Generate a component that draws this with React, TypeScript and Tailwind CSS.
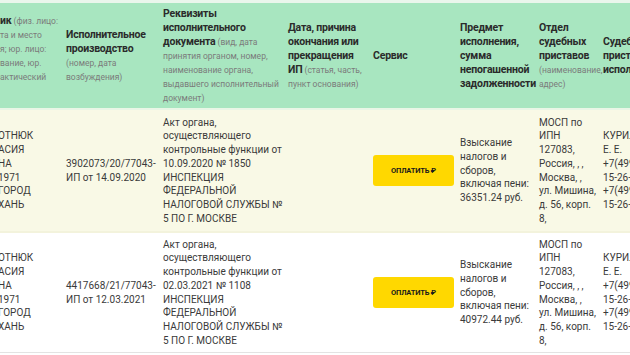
const cols = 'grid grid-cols-[60px_97px_125px_85px_87px_79px_64px_1fr]'

type Seg = [string, string?]

function Lines({ lines }: { lines: string[] }) {
  return (
    <>
      {lines.map((l, i) => (
        <div key={i} className="whitespace-nowrap">
          {l || '\u00a0'}
        </div>
      ))}
    </>
  )
}

// a header line: bold part, then an optional grey note on the same line
function HeadCell({ lines, first }: { lines: Seg[]; first?: boolean }) {
  return (
    <div className={`flex items-center ${first ? 'overflow-hidden pl-0' : 'pl-[6px]'}`}>
      <div>
        {lines.map(([bold, note], i) => (
          <div key={i} className="h-[14px] whitespace-nowrap">
            {bold}
            {note && (
              <span className="text-[8.5px] leading-[0] font-normal tracking-normal text-[#7b7b7b]">
                {note}
              </span>
            )}
          </div>
        ))}
      </div>
    </div>
  )
}

function PayButton() {
  return (
    <div className="flex h-[31px] w-[82px] items-center justify-center rounded-[3px] bg-[#ffd800] text-[7.5px] font-bold tracking-tight text-[#1b1b1b]">
      ОПЛАТИТЬ ₽
    </div>
  )
}

type Row = {
  ip: string
  date: string
  act: string
  sum: string
  bg: string
}

const rows: Row[] = [
  { ip: '3902073/20/77043-', date: '14.09.2020', act: '10.09.2020 № 1850', sum: '36351.24 руб.', bg: 'bg-[#f9f9e6]' },
  { ip: '4417668/21/77043-', date: '12.03.2021', act: '02.03.2021 № 1108', sum: '40972.44 руб.', bg: 'bg-white' },
]

function DataRow({ row, last }: { row: Row; last?: boolean }) {
  return (
    <div
      className={`${cols} ${row.bg} ${last ? 'h-[120px] border-b border-[#e3e3e3]' : 'h-[123px] border-b-2 border-[#f3f3dc]'} text-[10px] leading-[13.75px] text-[#3a3a3a]`}
    >
      <div className="flex items-center overflow-hidden">
        <div className="-ml-[2px]">
          <Lines lines={['ОТНЮК', 'АСИЯ', 'НА', '1971', 'ГОРОД', 'ХАНЬ']} />
        </div>
      </div>
      <div className="flex items-center pl-[6px]">
        <div>
          <Lines lines={[row.ip, 'ИП от ' + row.date]} />
        </div>
      </div>
      <div className="flex items-center pl-[6px]">
        <div>
          <Lines
            lines={[
              'Акт органа,',
              'осуществляющего',
              'контрольные функции от',
              row.act,
              'ИНСПЕКЦИЯ',
              'ФЕДЕРАЛЬНОЙ',
              'НАЛОГОВОЙ СЛУЖБЫ №',
              '5 ПО Г. МОСКВЕ',
            ]}
          />
        </div>
      </div>
      <div />
      <div className="flex items-center pl-[6px]">
        <PayButton />
      </div>
      <div className="flex items-center pl-[6px]">
        <div>
          <Lines lines={['Взыскание', 'налогов и', 'сборов,', 'включая пени:', row.sum]} />
        </div>
      </div>
      <div className="flex items-center pl-[6px]">
        <div>
          <Lines
            lines={[
              'МОСП по',
              'ИПН',
              '127083,',
              'Россия, , ,',
              'Москва, ,',
              'ул. Мишина,',
              'д. 56, корп.',
              '8,',
            ]}
          />
        </div>
      </div>
      <div className="flex items-center overflow-hidden pl-[6px]">
        <div>
          <Lines lines={['КУРИЛОВА', 'Е. Е.', '+7(499)', '15-26-51', '+7(499)', '15-26-51']} />
        </div>
      </div>
    </div>
  )
}

export default function App() {
  return (
    <div className="h-[355px] w-[630px] overflow-hidden bg-white font-['Roboto',sans-serif]">
      <div className="border-t-[3px] border-[#eaf6ec]">
        <div
          className={`${cols} h-[107px] border-b-2 border-[#e9f6e6] bg-[#a8e6c0] text-[10.5px] font-bold leading-[14px] tracking-[-0.2px] text-[#2b2b2b]`}
        >
          <HeadCell
            first
            lines={[
              ['ик', ' (физ. лицо:'],
              ['', 'та и место'],
              ['', 'я; юр. лицо:'],
              ['', 'вание, юр.'],
              ['', 'актический'],
              [''],
            ]}
          />
          <HeadCell
            lines={[
              ['Исполнительное'],
              ['производство'],
              ['', '(номер, дата'],
              ['', 'возбуждения)'],
            ]}
          />
          <HeadCell
            lines={[
              ['Реквизиты'],
              ['исполнительного'],
              ['документа', ' (вид, дата'],
              ['', 'принятия органом, номер,'],
              ['', 'наименование органа,'],
              ['', 'выдавшего исполнительный'],
              ['', 'документ)'],
            ]}
          />
          <HeadCell
            lines={[
              ['Дата, причина'],
              ['окончания или'],
              ['прекращения'],
              ['ИП', ' (статья, часть,'],
              ['', 'пункт основания)'],
            ]}
          />
          <HeadCell lines={[['Сервис']]} />
          <HeadCell
            lines={[
              ['Предмет'],
              ['исполнения,'],
              ['сумма'],
              ['непогашенной'],
              ['задолженности'],
            ]}
          />
          <HeadCell
            lines={[
              ['Отдел'],
              ['судебных'],
              ['приставов'],
              ['', '(наименование,'],
              ['', 'адрес)'],
            ]}
          />
          <HeadCell lines={[['Судебный'], ['пристав-'], ['исполнитель']]} />
        </div>
        {rows.map((r, i) => (
          <DataRow key={i} row={r} last={i === rows.length - 1} />
        ))}
      </div>
    </div>
  )
}
